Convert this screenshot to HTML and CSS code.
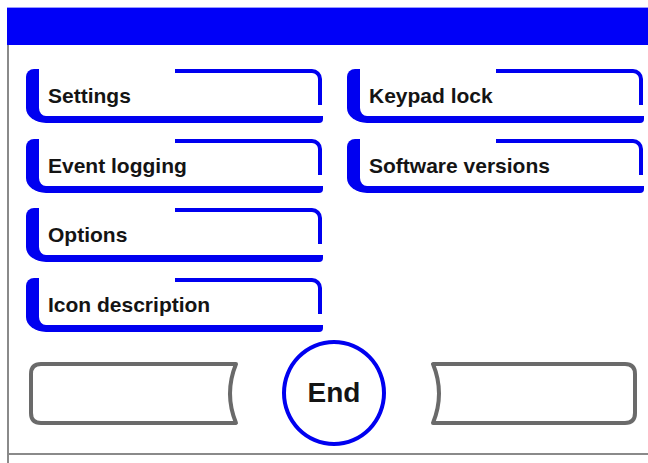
FILE: index.html
```html
<!DOCTYPE html>
<html>
<head>
<meta charset="utf-8">
<link rel="stylesheet" href="styles.css">
</head>
<body>
<div class="screen">
  <div class="header"></div>
  <div class="main">
    <div class="content">
      <div class="menu">
        <div class="menu-btn"><span>Settings</span></div>
        <div class="menu-btn"><span>Event logging</span></div>
        <div class="menu-btn"><span>Options</span></div>
        <div class="menu-btn"><span>Icon description</span></div>
        <div class="menu-btn"><span>Keypad lock</span></div>
        <div class="menu-btn"><span>Software versions</span></div>
      </div>
      <div class="bottom-row">
        <div class="soft-key soft-left">
          <svg width="210" height="63" viewBox="0 0 210 63"><path d="M12 2 H207 Q195 31.5 207 61 H12 Q2 61 2 51 V12 Q2 2 12 2 Z" fill="#fff" stroke="#6a6a6a" stroke-width="4" stroke-linejoin="round"/></svg>
        </div>
        <div class="end-btn">End</div>
        <div class="soft-key soft-right">
          <svg width="207" height="63" viewBox="0 0 207 63"><path d="M3 2 H195 Q205 2 205 12 V51 Q205 61 195 61 H3 Q15 31.5 3 2 Z" fill="#fff" stroke="#6a6a6a" stroke-width="4" stroke-linejoin="round"/></svg>
        </div>
      </div>
    </div>
  </div>
</div>
</body>
</html>
```
FILE: styles.css
```css
html, body {
  margin: 0;
  padding: 0;
  background: #fff;
}

body {
  font-family: "Liberation Sans", Arial, sans-serif;
  width: 648px;
  height: 463px;
  overflow: hidden;
}

.screen {
  margin: 8px 0 0 7px;
}

.header {
  height: 37px;
  background: #0000f8;
  box-shadow: 0 -1px 0 #9a9aff;
}

.main {
  border-left: 2px solid #8a8a8a;
  height: 418px;
}

.content {
  box-sizing: border-box;
  height: 410px;
  border-bottom: 2px solid #8a8a8a;
  padding: 24px 0 0 17px;
}

.menu {
  display: grid;
  grid-auto-flow: column;
  grid-template-rows: repeat(4, 54px);
  grid-template-columns: 297px 297px;
  column-gap: 24px;
  row-gap: 15.5px;
}

.menu-btn {
  position: relative;
  box-sizing: border-box;
  height: 54px;
  border-left: 13px solid #0000f0;
  border-bottom: 7px solid #0000f0;
  border-radius: 8px 0 4px 20px / 8px 0 4px 15px;
  padding: 15px 0 0 9px;
  font-size: 21px;
  line-height: 24px;
  font-weight: bold;
  color: #141414;
}

.menu-btn::before {
  content: "";
  position: absolute;
  top: 0;
  right: 1px;
  width: 147px;
  height: 36px;
  box-sizing: border-box;
  border-top: 4px solid #0000f0;
  border-right: 4px solid #0000f0;
  border-top-right-radius: 10px;
}

.bottom-row {
  display: flex;
  align-items: center;
  margin: 8.5px 0 0 3px;
}

.soft-key {
  display: flex;
}

.soft-key svg {
  display: block;
}

.end-btn {
  box-sizing: border-box;
  width: 104px;
  height: 106px;
  margin: 0 44px 0 43px;
  border: 4px solid #0000f0;
  border-radius: 50%;
  display: flex;
  align-items: center;
  justify-content: center;
  font-size: 28px;
  font-weight: bold;
  color: #141414;
}
```
